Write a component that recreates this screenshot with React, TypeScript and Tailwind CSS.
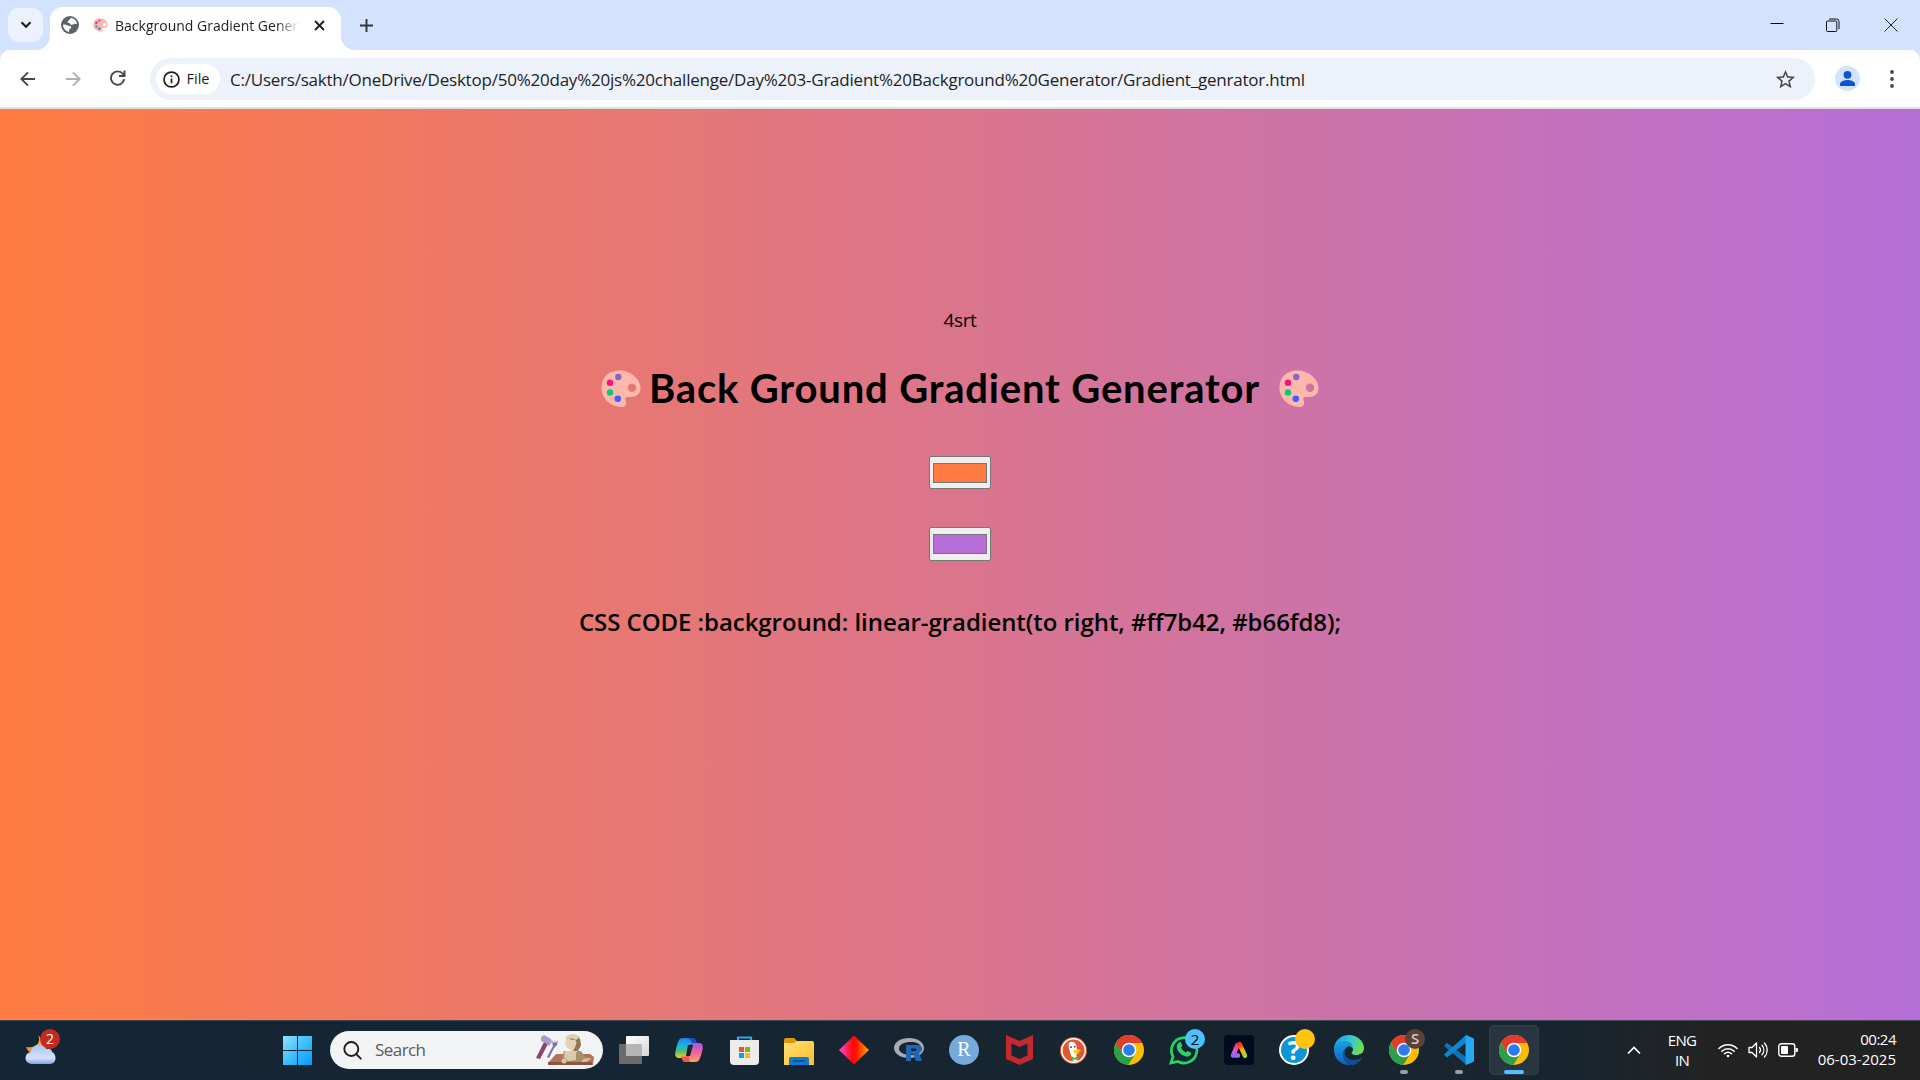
import type { ReactNode } from "react";

const URL_TEXT =
  "C:/Users/sakth/OneDrive/Desktop/50%20day%20js%20challenge/Day%203-Gradient%20Background%20Generator/Gradient_genrator.html";

function Palette({ className }: { className: string }) {
  return (
    <svg viewBox="0 0 40 38" className={className}>
      <path
        fillRule="evenodd"
        fill="#fdb8ab"
        d="M18.5.5C29 .5 39.5 8.500 39.500 18c0 6-4 9-10 9h-3.500c-1.500 0-2 1-1.500 2.500l.5 2.500c.6 3.500-1.500 5.200-5 5C10 36.500.5 29 .5 17.500.500 7 8 .5 18.500.5ZM31 13.500a4.200 4.200 0 1 0 0 8.400 4.200 4.200 0 0 0 0-8.400Z"
      />
      <circle cx="17.300" cy="7" r="3.200" fill="#8b63c7" />
      <circle cx="9" cy="12.700" r="3.200" fill="#fb0d8b" />
      <circle cx="9" cy="22.500" r="3.200" fill="#00ce74" />
      <circle cx="16.800" cy="28.800" r="3.300" fill="#3f5fff" />
    </svg>
  );
}

function Chrome() {
  return (
    <svg viewBox="0 0 30 30" className="size-[30px]">
      <circle cx="15" cy="15" r="15" fill="#fbbc05" />
      <path d="M15 15 8.900 18.500 2 7.500A15 15 0 0 0 14.200 30L21.500 18.500Z" fill="#2b9f4b" />
      <path d="M15 0a15 15 0 0 0-13 7.500l6.500 11L15 8h13.300A15 15 0 0 0 15 0Z" fill="#e33b2e" />
      <circle cx="15" cy="15" r="7.300" fill="#fff" />
      <circle cx="15" cy="15" r="5.800" fill="#2b7bf0" />
    </svg>
  );
}

function Badge({ className, children }: { className: string; children?: ReactNode }) {
  return (
    <span className={`absolute left-[26px] top-[4px] flex size-5 items-center justify-center rounded-full text-[15px] leading-none ${className}`}>
      {children}
    </span>
  );
}

function Cell({ children, className = "" }: { children: ReactNode; className?: string }) {
  return <div className={`relative mr-[5px] flex size-[50px] shrink-0 items-center justify-center ${className}`}>{children}</div>;
}

function ChromeTabs() {
  return (
    <div className="flex h-[50px] items-start bg-[#d3e3fd]">
      <button className="ml-2 mt-2 flex h-[34px] w-[35px] items-center justify-center rounded-[11px] bg-[#ebf1fd]">
        <svg viewBox="0 0 12 8" className="h-2 w-3" fill="none" stroke="#1f1f1f" strokeWidth="2.200">
          <path d="m1.500 1.200 4.500 4.500 4.500-4.500" />
        </svg>
      </button>
      <div className="relative ml-[7px] mt-[7px] flex h-[43px] w-[291px] items-center rounded-t-[13px] bg-white pb-[7px] pl-[11px]">
        <svg viewBox="0 0 14 14" className="absolute bottom-0 -left-[14px] size-[14px]" fill="#fff">
          <path d="M14 0v14H0A14 14 0 0 0 14 0Z" />
        </svg>
        <svg viewBox="0 0 14 14" className="absolute -right-[14px] bottom-0 size-[14px]" fill="#fff">
          <path d="M0 0v14h14A14 14 0 0 1 0 0Z" />
        </svg>
        <svg viewBox="0 0 18 18" className="size-[18px] shrink-0">
          <circle cx="9" cy="9" r="9" fill="#5f6368" />
          <path
            d="M10.500 2C8.500 2.500 8.800 4.300 7.200 5c-1 .5-.7 1.600.2 1.700 1.200.1 1.600.8 2.100 1.600.7 1.100 2.600.2 3.500-.3 1.200-.6 2.300.2 3 0A7.200 7.200 0 0 0 10.500 2Z"
            fill="#fff"
          />
          <path
            d="M2 8.500c1.800-.2 3 .2 4.300.8 1.500.7 3.700.4 4 2 .2 1.300-1.700 1.400-2.100 2.500-.3.900.2 1.700-.4 2.200A7.200 7.200 0 0 1 2 8.500Z"
            fill="#fff"
          />
        </svg>
        <Palette className="ml-[14px] h-[14px] w-[15px] shrink-0" />
        <span className="ml-[7px] w-[184px] overflow-hidden whitespace-nowrap bg-linear-to-r from-[#1f1f1f] from-[88%] to-[#1f1f1f00] bg-clip-text text-[14px] text-transparent">
          Background Gradient Gener
        </span>
        <svg viewBox="0 0 11 11" className="ml-[15px] size-[11px] shrink-0" stroke="#1f1f1f" strokeWidth="1.900">
          <path d="m1 1 9 9M10 1l-9 9" />
        </svg>
      </div>
      <svg viewBox="0 0 13 13" className="ml-[18.500px] mt-[19px] size-[13px]" stroke="#333" strokeWidth="1.900">
        <path d="M6.500 0v13M0 6.500h13" />
      </svg>
      <div className="ml-auto mr-[22px] mt-[17px] flex h-4 items-center gap-[42px]">
        <svg viewBox="0 0 14 14" className="size-[14px]" stroke="#000">
          <path d="M.5 5.500h13" />
        </svg>
        <svg viewBox="0 0 14 14" className="size-[14px]" fill="none" stroke="#111">
          <rect x=".5" y="3" width="10.300" height="10.500" rx="1" />
          <path d="M3 1h7.500A2.500 2.500 0 0 1 13 3.500V11" />
        </svg>
        <svg viewBox="0 0 14 14" className="ml-[2px] size-[14px]" stroke="#222">
          <path d="m.5.5 13 13M13.500.5l-13 13" />
        </svg>
      </div>
    </div>
  );
}

function Toolbar() {
  return (
    <div className="h-[59px] bg-[#d3e3fd]">
      <div className="flex h-[59px] items-start rounded-t-[10px] border-b-2 border-[#dfe1e1] bg-white">
        <svg viewBox="0 0 16 16" className="ml-5 mt-[20.500px] size-4" fill="none" stroke="#474747" strokeWidth="1.900">
          <path d="M15 8H2M8 1.300 1.300 8 8 14.700" />
        </svg>
        <svg viewBox="0 0 16 16" className="ml-[29px] mt-[20.500px] size-4" fill="none" stroke="#b0b0b0" strokeWidth="1.900">
          <path d="M1 8h13M8 1.300 14.700 8 8 14.700" />
        </svg>
        <svg viewBox="0 0 16 16" className="ml-[29px] mt-5 size-4" fill="none" stroke="#474747" strokeWidth="1.900">
          <path d="M14.300 9.200A6.700 6.700 0 1 1 13 4l1.200 1.500M14.500.5V6H9" />
        </svg>
        <div className="ml-6 mt-2 flex h-[42px] w-[1665px] items-center rounded-full bg-[#ecf1fa] pl-[6px]">
          <div className="flex h-[30px] w-16 items-center rounded-full bg-white pl-[6.500px] text-[#1f1f1f]">
            <svg viewBox="0 0 18 18" className="size-[17px]" fill="none" stroke="#1f1f1f" strokeWidth="1.800">
              <circle cx="9" cy="9" r="7.900" />
              <path d="M9 8v5M9 4.700v1.900" />
            </svg>
            <span className="ml-[7px] text-[14.500px] font-medium">File</span>
          </div>
          <span className="ml-[10px] mt-px whitespace-nowrap text-[17px] tracking-[-0.224px] text-[#1f1f1f]">{URL_TEXT}</span>
          <svg viewBox="0 0 24 24" className="ml-auto mr-[18.500px] size-[23px]" fill="#474747">
            <path d="M22 9.240l-7.190-.62L12 2 9.190 8.630 2 9.240l5.460 4.730L5.820 21 12 17.270 18.180 21l-1.630-7.030L22 9.240zM12 15.400l-3.760 2.270 1-4.280-3.320-2.880 4.380-.38L12 6.100l1.710 4.040 4.380.38-3.320 2.880 1 4.280L12 15.400z" />
          </svg>
        </div>
        <svg viewBox="0 0 25 25" className="ml-5 mt-4 size-[25px]">
          <circle cx="12.500" cy="12.500" r="12.500" fill="#d3e3fd" />
          <circle cx="12.500" cy="8.800" r="3.900" fill="#0b57d0" />
          <path d="M5 20v-2c0-2.700 5-4 7.500-4s7.500 1.300 7.500 4v2Z" fill="#0b57d0" />
        </svg>
        <svg viewBox="0 0 4 18" className="ml-[30px] mt-[19.500px] h-[18px] w-1" fill="#474747">
          <circle cx="2" cy="2" r="1.900" />
          <circle cx="2" cy="9" r="1.900" />
          <circle cx="2" cy="16" r="1.900" />
        </svg>
      </div>
    </div>
  );
}

function Swatch({ className }: { className: string }) {
  return (
    <div className="flex w-[62px] items-center rounded-[2px] border border-[#767676] bg-[#efefef] px-[3px]">
      <div className={`h-5 w-full border border-[#777] ${className}`} />
    </div>
  );
}

function Page() {
  return (
    <main className="flex h-[911px] flex-col items-center bg-linear-to-r/srgb from-[#ff7b42] to-[#b66fd8] text-black">
      <p className="mt-[197px] h-7 text-[19px] leading-7 tracking-[-0.400px]">4srt</p>
      <h1 className="mt-[28px] flex h-[52px] items-center whitespace-pre">
        <Palette className="mt-[2px] h-[38px] w-10" />
        <span className="ml-2 w-[630px] font-[Lato] text-[40px] font-bold leading-[52px] tracking-[0.820px]">
          Back Ground Gradient Generator
        </span>
        <Palette className="mt-[2px] h-[38px] w-10" />
      </h1>
      <div className="mt-[42px] flex h-[33px]">
        <Swatch className="bg-[#ff7b42]" />
      </div>
      <div className="mt-[38px] flex h-[34px]">
        <Swatch className="bg-[#b66fd8]" />
      </div>
      <h2 className="mt-[43px] whitespace-nowrap text-[24px] font-semibold leading-9 tracking-[-0.060px]">
        CSS CODE :background: linear-gradient(to right, #ff7b42, #b66fd8);
      </h2>
    </main>
  );
}

function SearchArt() {
  return (
    <svg viewBox="0 0 62 34" className="h-[34px] w-[62px]">
      <path d="m2 24 8-16 4 2-8 15Z" fill="#8a4668" />
      <path d="m7 3 3-2 7 4 1 3-3 4-3-3-5-2Z" fill="#a79bc8" />
      <path d="m13 23 6-11-1-5 2 2 1-2 1 2 2-3-1 5-3 3-5 10Z" fill="#7670a4" />
      <path d="m22 20-8 9v2h45l1-8-4-3Z" fill="#b0765c" />
      <path d="M14 28h44v3H14Z" fill="#8a5643" />
      <path d="M30 17h17l5 7-2 4H33l-5-4Z" fill="#a88f6c" />
      <path d="M31 17h11v9l-8 1-4-4Z" fill="#dccbab" />
      <path d="M32 4c2-5 13-5 14 1l1 7-4 6h-6l-1-3-3-1-2-4Z" fill="#e3d4b3" />
      <path d="M39 6c3-1 4 2 3 5l-3 6h5l3-6-1-6c-2-5-12-5-14-1Z" fill="#8d7650" />
      <path d="M32 3c3-4 10-4 13 1l-3 2c-3-2-7-2-10 0Z" fill="#ddd0b4" />
      <circle cx="30" cy="27" r="2.500" fill="#dac7a3" />
      <path d="M47 28c2-4 8-5 10-3l-5 3Z" fill="#d3bc98" />
    </svg>
  );
}

function Taskbar() {
  return (
    <footer className="flex h-[60px] items-center border-t border-[#3f4b54] bg-linear-to-r from-[#142536] via-[#19252e] via-82% to-[#232222] to-90% pb-px text-white">
      <div className="relative ml-[17px] flex size-[50px] items-center justify-center">
        <svg viewBox="0 0 32 30" className="-ml-[2px] h-[30px] w-8">
          <defs>
            <linearGradient id="moon" x1="0" x2="0" y1="0" y2="1">
              <stop stopColor="#f7c63c" />
              <stop offset="1" stopColor="#ee8a1e" />
            </linearGradient>
            <linearGradient id="cloud" x1="0" x2="0" y1="0" y2="1">
              <stop stopColor="#a9c4f3" />
              <stop offset=".7" stopColor="#d3e1f7" />
              <stop offset="1" stopColor="#7fa3e6" />
            </linearGradient>
          </defs>
          <path d="M13 0c4 7-2 14-12 12 2 5 6 8 10 8l12-8Z" fill="url(#moon)" />
          <path d="M7 29a6 6 0 0 1-1-12c1-9 13-9 15-3 4-1 6 1 6 3 5 2 5 12-2 12Z" fill="url(#cloud)" />
        </svg>
        <span className="absolute left-[23px] top-[4px] flex size-5 items-center justify-center rounded-full bg-[#c42b1c] text-[14px] leading-none">2</span>
      </div>
      <div className="ml-[205px] flex size-[50px] items-center justify-center">
        <svg viewBox="0 0 29 29" className="size-[29px]">
          <defs>
            <linearGradient id="win" x1="0" y1="0" x2="29" y2="29" gradientUnits="userSpaceOnUse">
              <stop stopColor="#8fe3ff" />
              <stop offset=".5" stopColor="#3dbffb" />
              <stop offset="1" stopColor="#0797fb" />
            </linearGradient>
          </defs>
          <path d="M0 0h14v14H0ZM15 0h14v14H15ZM0 15h14v14H0ZM15 15h14v14H15Z" fill="url(#win)" />
        </svg>
      </div>
      <div className="ml-2 flex h-[38px] w-[273px] items-center rounded-full bg-[#f2f3f5] pl-[13px]">
        <svg viewBox="0 0 19 19" className="size-[19px]" fill="none" stroke="#1d1d1d" strokeWidth="1.900" strokeLinecap="round">
          <circle cx="8.300" cy="8" r="7" />
          <path d="m13.300 13.200 4.500 4.500" />
        </svg>
        <span className="ml-[13px] text-[17px] tracking-[-0.560px] text-[#5b5b5b]">Search</span>
        <div className="ml-auto mr-[7px] mt-[2px]">
          <SearchArt />
        </div>
      </div>

      <Cell className="ml-[6px]">
        <svg viewBox="0 0 30 28" className="h-7 w-[30px]">
          <defs>
            <linearGradient id="tv" x1="0" x2="1" y1="0" y2="1">
              <stop stopColor="#fff" />
              <stop offset="1" stopColor="#d8d8d8" />
            </linearGradient>
          </defs>
          <rect y="8" width="23" height="20" rx="1" fill="#6b6b6b" />
          <rect x="7" width="23" height="20" rx="1" fill="url(#tv)" />
          <path d="M7 8h16v12H7Z" fill="#b5b5b5" />
        </svg>
      </Cell>
      <Cell>
        <svg viewBox="0 0 28 26" className="h-[26px] w-7">
          <defs>
            <linearGradient id="cpA" x1="0" x2="0" y1="0" y2="1">
              <stop stopColor="#2a7fe0" />
              <stop offset=".35" stopColor="#18b0ee" />
              <stop offset=".65" stopColor="#52bd6a" />
              <stop offset="1" stopColor="#f2cf2e" />
            </linearGradient>
            <linearGradient id="cpB" x1="0" x2="0" y1="0" y2="1">
              <stop stopColor="#a259e8" />
              <stop offset=".5" stopColor="#f0619a" />
              <stop offset="1" stopColor="#ffa45c" />
            </linearGradient>
          </defs>
          <path d="M12 1h6c3 0 3 6 5 6h-6c-3 0-3 4-4 8s-3 6-5 6H4c-5 0-4-5-3-9C3 4 4 1 8 1Z" fill="url(#cpA)" />
          <path d="M14 1h4c3 0 3 6 5 6h-4c-3 0-3-6-7-6Z" fill="#1d4fc4" />
          <path d="M16 25h-6c-3 0-3-6-5-6h6c3 0 3-4 4-8s3-5 5-5h4c5 0 4 5 3 9-2 7-3 10-7 10Z" fill="url(#cpB)" />
          <path d="M14 25h-4c-3 0-2-4-4-5h5l3-4c0 4-1 7 2 9Z" fill="#ee5a3a" />
          <path d="M13 8h5l-3 11h-4Z" fill="#18232d" />
        </svg>
      </Cell>
      <Cell>
        <svg viewBox="0 0 29 29" className="size-[29px]">
          <path d="M8 6V1.500h13V6" fill="none" stroke="#27a9e8" strokeWidth="2.200" />
          <path d="M0 4h29v21a4 4 0 0 1-4 4H4a4 4 0 0 1-4-4Z" fill="#ececec" />
          <path d="M9 11h5v5H9Z" fill="#f25022" />
          <path d="M15 11h5v5h-5Z" fill="#7fba00" />
          <path d="M9 17h5v5H9Z" fill="#00a4ef" />
          <path d="M15 17h5v5h-5Z" fill="#ffb900" />
        </svg>
      </Cell>
      <Cell>
        <svg viewBox="0 0 30 27" className="mt-[2px] h-[27px] w-[30px]">
          <defs>
            <linearGradient id="fold" x1="0" x2="1" y1="0" y2="1">
              <stop stopColor="#ffe07a" />
              <stop offset="1" stopColor="#fbbf24" />
            </linearGradient>
          </defs>
          <path d="M0 2Q0 0 2 0h8l3 3v5H0Z" fill="#dd9b0a" />
          <path d="M0 5h10l3-2h15q2 0 2 2v22H0Z" fill="url(#fold)" />
          <path d="M5 27v-6q0-2 2-2h16q2 0 2 2v6Z" fill="#1478cf" />
          <path d="M9 23h12" stroke="#0b4d91" strokeWidth="1.500" />
        </svg>
      </Cell>
      <Cell>
        <svg viewBox="0 0 30 30" className="size-[30px]">
          <defs>
            <linearGradient id="dia">
              <stop stopColor="#f64be0" />
              <stop offset=".45" stopColor="#ff0808" />
              <stop offset=".6" stopColor="#ff1800" />
              <stop offset="1" stopColor="#ffae00" />
            </linearGradient>
          </defs>
          <path d="m15 .5 15 14.500-15 14.500L0 15Z" fill="url(#dia)" />
        </svg>
      </Cell>
      <Cell>
        <svg viewBox="0 0 30 24" className="h-6 w-[30px]">
          <path
            fillRule="evenodd"
            fill="#a9acb1"
            d="M15 0c8 0 15 4 15 10s-7 10-15 10S0 16 0 10 7 0 15 0Zm2 4C10 4 5 6.500 5 10.500S10 17 17 17s10-2.500 10-6.500S24 4 17 4Z"
          />
          <path fillRule="evenodd" fill="#2266b8" d="M12 7h11c7 0 6 7 2 8l3 8h-6l-3-7h-2v7h-5Zm5 3.500v2.500h4c2 0 2-2.500 0-2.500Z" />
        </svg>
      </Cell>
      <Cell>
        <span className="flex size-[30px] items-center justify-center rounded-full bg-[#75aadb] pb-[2px] font-[Liberation_Serif] text-[20px] leading-none">R</span>
      </Cell>
      <Cell>
        <svg viewBox="0 0 27 30" className="h-[30px] w-[27px]">
          <path fillRule="evenodd" fill="#c3292e" d="m0 0 13.500 6L27 0v24l-13.500 6L0 24Zm5.500 8.500v12L13.500 24l8-3.500v-12l-8 3.500Z" />
        </svg>
      </Cell>
      <Cell>
        <svg viewBox="0 0 28 28" className="-ml-px size-[27px]">
          <circle cx="14" cy="14" r="14" fill="#de5833" />
          <circle cx="14" cy="14" r="12.200" fill="none" stroke="#fff" strokeWidth="1.600" />
          <path d="M9 7c1-3 7-3 8 2l1 5-1 5 1 6.500-4 .3C12 20 9 13 9 9Z" fill="#fff" />
          <path d="M14 14c3-2 7-1 8 0l-4 1.500 3 1c-2 1-7 1-7-1Z" fill="#fdd20a" />
          <path d="M12 20l3 1.500 4-1.500v4l-4-1-2 1.500Z" fill="#4cba3c" />
          <circle cx="15.300" cy="10" r="1" fill="#2d4f8e" />
          <circle cx="11.500" cy="10.500" r="1" fill="#2d4f8e" />
        </svg>
      </Cell>
      <Cell>
        <Chrome />
      </Cell>
      <Cell>
        <svg viewBox="0 0 30 30" className="size-[30px]">
          <path d="M2 28 4 21.500A12.700 12.700 0 1 1 9 26.500Z" fill="none" stroke="#25d366" strokeWidth="2.700" />
          <path
            d="M10 7.500c1-.8 1.800-.4 2.200.5l1 2.500c.2.700-1 1.500-1.200 2 .8 2.200 2.700 4 5 5 .6-.3 1.300-1.600 2-1.400l2.800 1.400c.7.500.4 2-.3 2.800-1.500 1.700-4 1.700-6.200.7-3.500-1.400-6.300-4.300-7.300-7.200-.8-2.300 0-5 2-6.300Z"
            fill="#25d366"
          />
        </svg>
        <Badge className="bg-[#4cc2ff] text-black">2</Badge>
      </Cell>
      <Cell>
        <svg viewBox="0 0 30 30" className="size-[30px]">
          <defs>
            <linearGradient id="legL" x1="14" y1="8" x2="10" y2="23" gradientUnits="userSpaceOnUse">
              <stop stopColor="#ff2a2a" />
              <stop offset=".45" stopColor="#f04bd0" />
              <stop offset="1" stopColor="#6f74ff" />
            </linearGradient>
            <linearGradient id="legR" x1="15" y1="8" x2="21" y2="22" gradientUnits="userSpaceOnUse">
              <stop stopColor="#ff2020" />
              <stop offset=".5" stopColor="#ffb000" />
              <stop offset="1" stopColor="#8be04b" />
            </linearGradient>
          </defs>
          <rect width="30" height="30" rx="4" fill="#000b1d" />
          <path d="M13.500 10 9 20.500h5" fill="none" stroke="url(#legL)" strokeWidth="4.500" strokeLinecap="round" strokeLinejoin="round" />
          <path d="m15.500 9 5.500 11.800" fill="none" stroke="url(#legR)" strokeWidth="4.500" strokeLinecap="round" />
        </svg>
      </Cell>
      <Cell>
        <span className="flex size-[30px] items-center justify-center rounded-full border-2 border-white bg-[#0a97d9] text-[26px] font-bold leading-none">?</span>
        <Badge className="bg-[#ffc20e]" />
      </Cell>
      <Cell>
        <svg viewBox="0 0 30 30" className="size-[30px]">
          <defs>
            <linearGradient id="e1" x1="0" x2="1" y1=".2" y2=".5">
              <stop stopColor="#1b9de2" />
              <stop offset=".5" stopColor="#35c6d6" />
              <stop offset="1" stopColor="#6be04d" />
            </linearGradient>
            <linearGradient id="e2" x1="0" x2="0" y1="0" y2="1">
              <stop stopColor="#1aa0e8" />
              <stop offset="1" stopColor="#0f5fb8" />
            </linearGradient>
          </defs>
          <path d="M0 14C0 6 7 0 15 0s15 6 15 13c0 5-4 7-8 7s-5-2-4-3c2-2 1-6-4-6Z" fill="url(#e1)" />
          <path d="M0 15C0 8 7 5 12 6c5 1 7 4 7 7-1-2-4-3-6-1-5 4-2 13 5 17l-3 1C6 30 0 23 0 15Z" fill="url(#e2)" />
          <path d="M12 13c-4 5 1 13 8 12 3 0 5-1 7-2 1-.5 1 0 .5 1C25 28 20 31 16 30c-7-2-10-13-4-17Z" fill="#124f97" />
        </svg>
      </Cell>
      <Cell>
        <Chrome />
        <Badge className="bg-[#5d4037] pb-px font-semibold text-[#d5ccc8]">S</Badge>
        <span className="absolute bottom-[1px] left-[21px] h-1 w-2 rounded-full bg-[#9a9fa3]" />
      </Cell>
      <Cell>
        <svg viewBox="0 0 30 30" className="size-[30px]">
          <path d="M0 10.500 3 7.800l19.500 14.700V30L2 12.800Z" fill="#0a74ba" />
          <path d="M0 19.500 22 0v7.800L3 22.500Z" fill="#1186cf" />
          <path d="m22 0 8 3.500v23L22 30c-.5-.5-.5-1-.5-1.500v-27Z" fill="#27a8f3" />
        </svg>
        <span className="absolute bottom-[1px] left-[21px] h-1 w-2 rounded-full bg-[#9a9fa3]" />
      </Cell>
      <Cell className="rounded-[5px] bg-[#29353f] ring-1 ring-[#323e47] ring-inset">
        <Chrome />
        <span className="absolute bottom-[1px] left-[15px] h-1 w-5 rounded-full bg-[#4cc2ff]" />
      </Cell>

      <div className="ml-auto flex items-center">
        <svg viewBox="0 0 14 9" className="h-[9px] w-[14px]" fill="none" stroke="#fff" strokeWidth="1.700">
          <path d="m1 7.500 6-6 6 6" />
        </svg>
        <div className="-mt-px ml-[25px] w-[32px] text-center text-[15px] leading-5 tracking-[-0.700px]">
          <div>ENG</div>
          <div>IN</div>
        </div>
        <svg viewBox="0 0 20 16" className="ml-5 h-4 w-5" fill="none" stroke="#fff" strokeWidth="1.500" strokeLinecap="round">
          <path d="M1 6.500a12.500 12.500 0 0 1 18 0M3.800 9.200a8.800 8.800 0 0 1 12.400 0M6.500 11.800a5 5 0 0 1 7 0" />
          <circle cx="10" cy="14" r="1.300" fill="#fff" stroke="none" />
        </svg>
        <svg viewBox="0 0 20 18" className="ml-[10px] h-[18px] w-5" fill="none" stroke="#fff" strokeWidth="1.300" strokeLinecap="round" strokeLinejoin="round">
          <path d="M1 6.500h3L8.500 2v14L4 11.500H1ZM11.500 6.500c1.300 1.500 1.300 3.500 0 5M14 4.200c2.500 2.800 2.500 6.800 0 9.600M16.500 2c3.600 4 3.600 10 0 14" />
        </svg>
        <svg viewBox="0 0 20 14" className="ml-[10px] h-[14px] w-5">
          <rect x=".8" y=".8" width="16" height="12.400" rx="2.500" fill="none" stroke="#fff" strokeWidth="1.400" />
          <rect x="3" y="3" width="7" height="8" rx="1" fill="#fff" />
          <path d="M17.500 5H19q1 0 1 1v2q0 1-1 1h-1.500Z" fill="#fff" />
        </svg>
        <div className="-mt-[3px] ml-[18px] mr-6 w-20 text-right text-[15px] leading-5">
          <div className="tracking-[-0.500px]">00:24</div>
          <div>06-03-2025</div>
        </div>
      </div>
    </footer>
  );
}

export default function App() {
  return (
    <div className="h-[1080px] w-[1920px] overflow-hidden font-['Open_Sans',sans-serif]">
      <ChromeTabs />
      <Toolbar />
      <Page />
      <Taskbar />
    </div>
  );
}
